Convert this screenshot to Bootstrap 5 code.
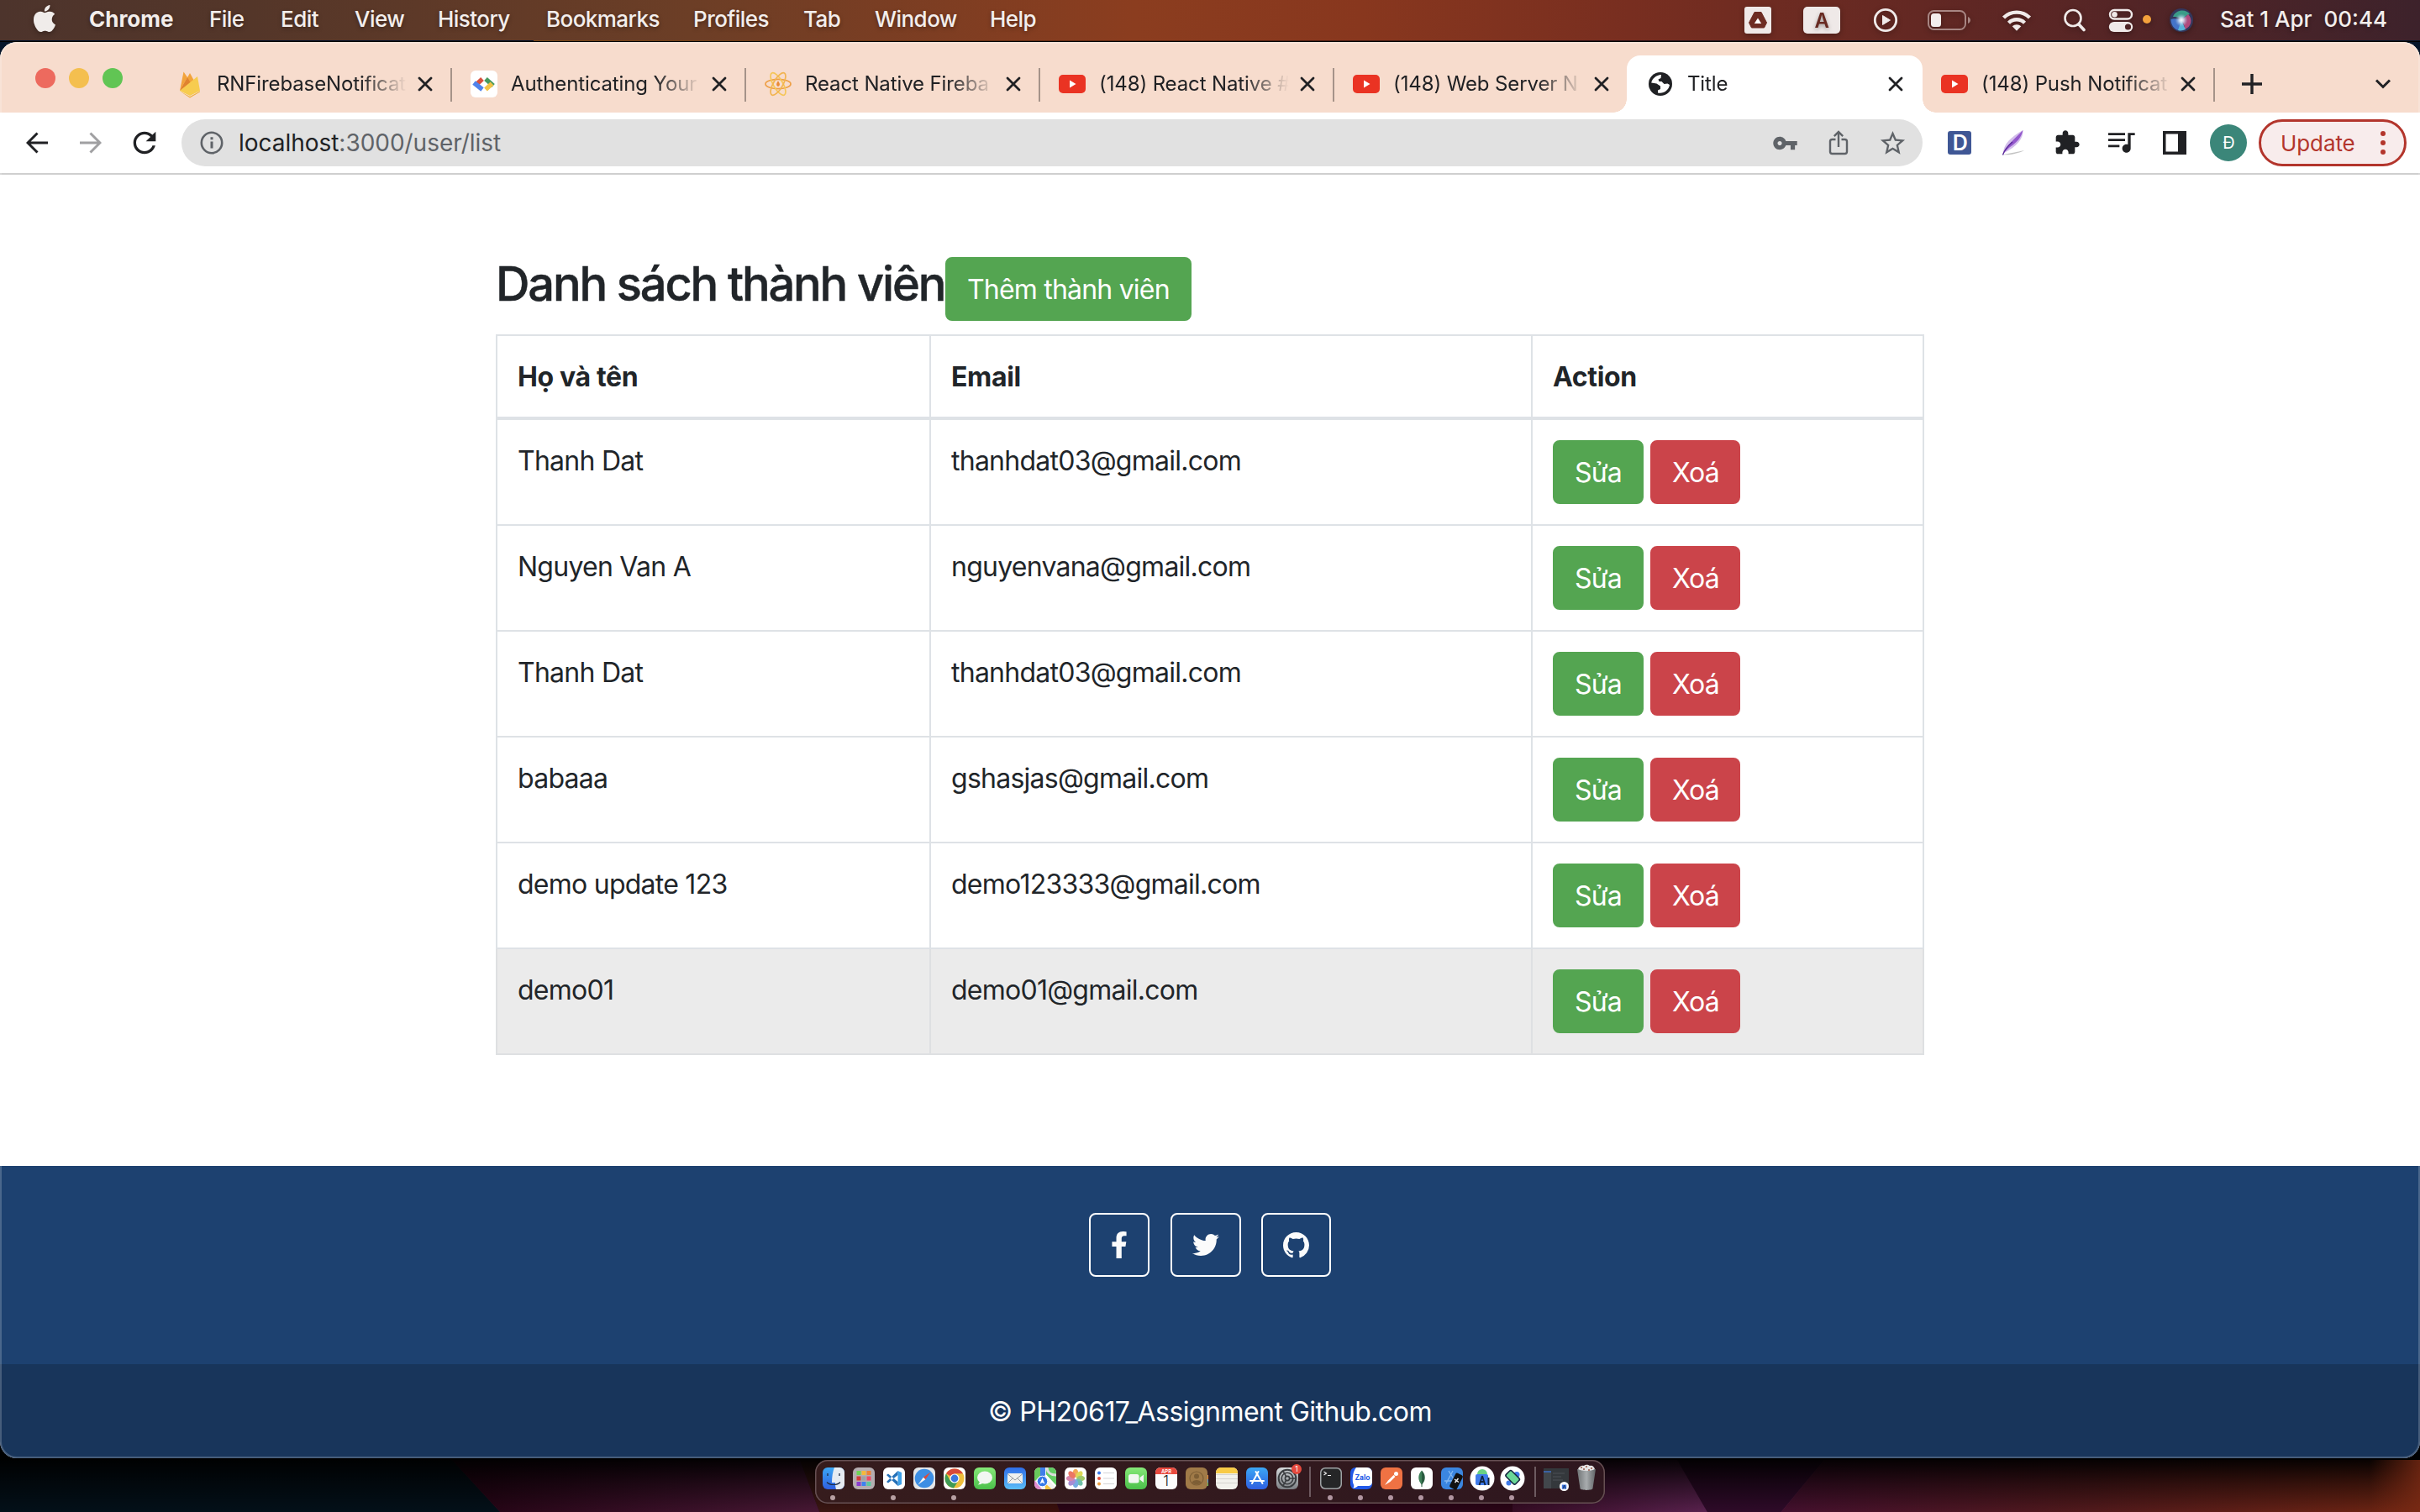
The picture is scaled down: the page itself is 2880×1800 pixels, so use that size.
<!DOCTYPE html>
<html lang="vi">
<head>
<meta charset="utf-8">
<title>Title</title>
<link href="https://cdn.jsdelivr.net/npm/bootstrap@5.3.0/dist/css/bootstrap.min.css" rel="stylesheet">
<style>
html{font-size:32px}
body{width:2880px;height:1800px;overflow:hidden;background:#000;font-family:Inter,"Noto Sans",sans-serif;color:#212529;letter-spacing:-.75px}
svg{display:block;flex:none}
/* menu bar */
.mac-menu{height:48px;background:linear-gradient(90deg,#4d342c 0,#543629 300px,#6c3e26 820px,#8b3d1f 1350px,#88371e 1620px,#782e20 1940px,#5c2624 2400px,#3d222b 2880px);color:#f3eeec;font-size:26px;font-weight:500;letter-spacing:-.55px;line-height:46px;text-shadow:0 2px 5px rgba(0,0,0,.35);white-space:pre}
.mac-menu svg{filter:drop-shadow(0 2px 3px rgba(0,0,0,.3))}
.apple{width:106px;padding:6px 0 0 37px}
.menus>span:nth-child(1){width:143px;font-weight:700;letter-spacing:0}
.menus>span:nth-child(2){width:85px}
.menus>span:nth-child(3){width:88px}
.menus>span:nth-child(4){width:99px}
.menus>span:nth-child(5){width:129px}
.menus>span:nth-child(6){width:175px}
.menus>span:nth-child(7){width:131px}
.menus>span:nth-child(8){width:85px}
.menus>span:nth-child(9){width:137px}
.tray>div{display:flex;align-items:center;justify-content:center;height:48px;width:76px}
.tray>.w-wifi{width:84px}.tray>.w-find{width:58px;padding-right:4px}.tray>.w-cc{width:48px}.tray>.w-dot{width:14px;height:46px}.tray>.w-siri{width:68px}
.clock{width:250px;padding-left:12px;letter-spacing:0}
.seam{height:2px;background:linear-gradient(90deg,#04122a 635px,#7a4818 635px,#5a2410 1400px,#25101a 2000px,#06152a 2400px);border-bottom:1px solid #000}
/* browser window */
.win-back{background:linear-gradient(#06152a 0,#06152a 60px,#000 61px)}
.browser{height:1686px;border-radius:20px;overflow:hidden;background:#fff}
.browser::after{content:"";position:absolute;inset:0;border-radius:20px;border:2px solid rgba(255,255,255,.2);pointer-events:none}
.strip{height:84px;background:#f7dccd;font-size:24px;letter-spacing:-.12px;color:#202124}
.lights{width:188px;padding:2px 0 0 42px;gap:16px;height:84px}
.lights i{width:24px;height:24px;border-radius:50%;background:#ed6a5e}
.lights i+i{background:#f4bf4f}.lights i+i+i{background:#61c554}
.tabx{width:350px;height:68px;padding-left:22px;position:relative}
.tabx.ruled::after{content:"";position:absolute;right:0;top:15px;width:2px;height:40px;background:#a59389}
.tab-ico{width:32px;height:34px;display:flex;align-items:center;justify-content:center;flex:none}
.tab-t{width:232px;margin-left:16px;white-space:nowrap;line-height:36px;-webkit-mask-image:linear-gradient(90deg,#000 172px,transparent 226px);mask-image:linear-gradient(90deg,#000 172px,transparent 226px)}
.tab-x{margin-left:7px}
.tabx.on{background:#fff;border-radius:16px 16px 0 0;margin-left:-2px;width:352px;padding-left:24px}
.tabx.on::before,.tabx.on::after{content:"";position:absolute;bottom:0;width:16px;height:16px}
.tabx.on::before{left:-16px;background:radial-gradient(circle at 0 0,transparent 15.5px,#fff 16px)}
.tabx.on::after{right:-16px;background:radial-gradient(circle at 100% 0,transparent 15.5px,#fff 16px)}
.tabx.last{width:348px}
.tabx.last .tab-x{margin-left:5px}
.strip-end{height:68px;padding:0 34px 0 32px}
.tools{height:74px;border-bottom:2px solid #cfcfcf;color:#202124}
.tools .slot{width:64px;height:72px;display:flex;align-items:center;justify-content:center;flex:none}
.nav-btns{padding-left:12px}
.omni{width:2072px;height:56px;margin:0 12px;border-radius:28px;background:#e1e1e1;font-size:28px;letter-spacing:-.03px;color:#5f6368;padding:0 4px 0 22px}
.omni .slot{height:56px}
.omni b{font-weight:400;color:#202124}
.url{padding-left:18px}
.avatar{width:44px;height:44px;border-radius:50%;background:#3b8679;color:#fff;font-size:20px;line-height:44px;text-align:center}
.update{width:176px;height:56px;border:3px solid #b3352c;border-radius:28px;background:#f8ecec;color:#b3352c;font-size:26px;letter-spacing:-.1px;margin-left:4px;padding-left:23px}
.update svg{margin-left:30px}
/* page */
.page-body{height:1180px;padding-top:98px}
.wrap{width:1700px;margin:0 auto}
.ttl{font-size:56px;font-weight:500;line-height:64px;letter-spacing:-2.15px;margin:0;width:535px;white-space:nowrap;-webkit-text-stroke:.5px #212529}
.btn{border-width:2px;border-radius:8px;letter-spacing:-.8px;padding-top:13px;padding-bottom:11px}
.btn-go{--bs-btn-color:#fff;--bs-btn-bg:#54a551;--bs-btn-border-color:#54a551}
.btn-del{--bs-btn-color:#fff;--bs-btn-bg:#cb444a;--bs-btn-border-color:#cb444a;width:107px}
.members{width:1700px;table-layout:fixed;margin:16px 0 0;border-color:#dee2e6;color:#212529}
.members>:not(caption)>*{border-width:0}
.members>:not(caption)>*>*{padding:25px 24px 23px;border:2px solid #dee2e6;background:transparent}
.members>tbody>tr>td:last-child{padding:24px}
.members .c-name{width:516px}.members .c-mail{width:716px}
.members thead th{border-bottom-width:4px;letter-spacing:-.35px;line-height:48px}
.members .hov>*{background:#ebebeb;border-color:#dee0e2}
.foot-a{height:236px;background:#1d4170;padding-top:56px;gap:24.5px}
.btn-soc{height:76px;border:2px solid #fff;color:#fbfbfb;padding:0;display:flex;align-items:center;justify-content:center;width:84px}
.btn-soc:first-child{width:72px}
.btn-soc:last-child{width:83px}
.foot-b{height:112px;background:#18355b;color:#fff;line-height:112px;padding-top:1px;letter-spacing:-.52px}
/* dock */
.desk{height:64px;position:relative}
.wall{position:absolute;left:0;top:0}
.dock{position:relative;width:940px;height:52px;margin:2px auto 0;padding-left:4px;border-radius:15px;background:linear-gradient(90deg,#361c1d,#2f171f);box-shadow:inset 0 0 0 1.5px #665053}
.dock .rule{width:16px;height:36px;margin-top:8px;background:linear-gradient(#6d5a60,#6d5a60) 8px 0/2px 100% no-repeat}
.dock svg text{letter-spacing:0}
</style>
</head>
<body class="m-0">
<header class="mac-menu d-flex">
  <div class="apple"><svg width="32" height="32" viewBox="0 0 16 16" fill="#f0ecea"><path d="M11.182.008C11.148-.03 9.923.023 8.857 1.18c-1.066 1.156-.902 2.482-.878 2.516.024.034 1.52.087 2.475-1.258.955-1.345.762-2.391.728-2.43Zm3.314 11.733c-.048-.096-2.325-1.234-2.113-3.422.212-2.189 1.675-2.789 1.698-2.854.023-.065-.597-.79-1.254-1.157a3.692 3.692 0 0 0-1.563-.434c-.108-.003-.483-.095-1.254.116-.508.139-1.653.589-1.968.607-.316.018-1.256-.522-2.267-.665-.647-.125-1.333.131-1.824.328-.49.196-1.422.754-2.074 2.237-.652 1.482-.311 3.83-.067 4.56.244.729.625 1.924 1.273 2.796.576.984 1.34 1.667 1.659 1.899.319.232 1.219.386 1.843.067.502-.308 1.408-.485 1.766-.472.357.013 1.061.154 1.782.539.571.197 1.111.115 1.652-.105.541-.221 1.324-1.059 2.238-2.758.347-.79.505-1.217.473-1.282Z"/></svg></div>
  <nav class="menus d-flex"><span>Chrome</span><span>File</span><span>Edit</span><span>View</span><span>History</span><span>Bookmarks</span><span>Profiles</span><span>Tab</span><span>Window</span><span>Help</span></nav>
  <div class="tray d-flex ms-auto">
    <div><svg width="32" height="32" viewBox="0 0 32 32"><rect width="32" height="32" rx="3" fill="#efe9e8"/><path d="M12 6.500h8L26.500 19l-3 6h-15l-3-6z" fill="#6d2b22" stroke="#6d2b22" stroke-linejoin="round"/><path d="M16 13.500l4.200 6.500h-8.400z" fill="#fff"/></svg></div>
    <div><svg width="44" height="32" viewBox="0 0 44 32"><rect width="44" height="32" rx="5" fill="#efe9e8"/><text x="22" y="25" font-size="24" font-weight="600" text-anchor="middle" fill="#682a22">A</text></svg></div>
    <div><svg width="30" height="30" viewBox="0 0 30 30"><circle cx="15" cy="15" r="12.700" fill="none" stroke="#f0eae9" stroke-width="2.800"/><path d="M11.500 9.500v11L20.500 15z" fill="#f0eae9" stroke="#f0eae9" stroke-linejoin="round"/></svg></div>
    <div><svg width="52" height="24" viewBox="0 0 52 24"><rect x="1" y="1" width="44" height="22" rx="6.500" fill="none" stroke="#a88683" stroke-width="2"/><path d="M48 8c2 1 3 2.500 3 4s-1 3-3 4z" fill="#a88683"/><rect x="4" y="4" width="12" height="16" rx="3.500" fill="#f3eeed"/></svg></div>
    <div class="w-wifi"><svg width="36" height="26" viewBox="0 0 36 26" fill="none" stroke="#f0eae9" stroke-width="4.400"><path d="M2.500 10a22 22 0 0 1 31 0M8.500 16.200a13.500 13.500 0 0 1 19 0"/><path d="M12.700 20.300a8 8 0 0 1 10.600 0L18 25.800z" fill="#f0eae9" stroke="none"/></svg></div>
    <div class="w-find"><svg width="26" height="28" viewBox="0 0 26 28" fill="none" stroke="#f0eae9" stroke-linecap="round"><circle cx="11" cy="11.500" r="9.500" stroke-width="2.600"/><path d="M18 19l6 6.500" stroke-width="3.600"/></svg></div>
    <div class="w-cc"><svg width="30" height="28" viewBox="0 0 30 28"><rect x="2" y="2" width="26" height="10.500" rx="5.200" fill="none" stroke="#f0eae9" stroke-width="2.400"/><circle cx="7.500" cy="7.200" r="3.300" fill="#f0eae9"/><rect x=".8" y="16" width="28.400" height="12" rx="6" fill="#f0eae9"/><circle cx="23.500" cy="22" r="3.600" fill="#4f2425"/></svg></div>
    <div class="w-dot"><svg width="10" height="10" viewBox="0 0 10 10"><circle cx="5" cy="5" r="5" fill="#f3a13c"/></svg></div>
    <div class="w-siri"><svg width="28" height="28" viewBox="0 0 28 28"><defs><radialGradient id="si" cx=".5" cy=".5"><stop offset="0" stop-color="#fff"/><stop offset=".25" stop-color="#d8e8f8" stop-opacity=".85"/><stop offset=".7" stop-color="#9cb8dc" stop-opacity="0"/></radialGradient></defs><circle cx="14" cy="14" r="14" fill="#33375c"/><path d="M4 10C7 1 20 0 24 7c-6 2-8 5-10 6-3-3-6-3-10-3z" fill="#3b9c88"/><path d="M22 7c6 6 4 15-4 18 0-5-2-8-4-12 3-1 5-3 8-6z" fill="#b04a7c"/><path d="M1.500 13c4-2 9 0 12.500 1 0 4-2 9-3 12-6-1-9.500-7-9.500-13z" fill="#4474c8"/><path d="M10 26l4-12 5 11c-3 1.500-6 2-9 1z" fill="#58b4d8"/><circle cx="14" cy="14" r="11" fill="url(#si)"/></svg></div>
  </div>
  <div class="clock">Sat 1 Apr  00:44</div>
</header>
<div class="seam"></div>

<div class="win-back">
<main class="browser position-relative">
  <div class="strip d-flex align-items-end">
    <div class="lights d-flex align-items-center"><i></i><i></i><i></i></div>
    <div class="tabx ruled d-flex align-items-center">
      <span class="tab-ico"><svg width="26" height="34" viewBox="0 0 26 34"><path d="M1 25L5.500 2.500 10 9z" fill="#f2a33b"/><path d="M1 25L13 4l5 9z" fill="#f2a33b"/><path d="M1 25l9-16 4 7z" fill="#e0832f"/><path d="M1 25L22 8l3 17-12 6z" fill="#f7cc4f"/><path d="M1 25.500L13 32l12-6.500v1L13 33.500z" fill="#eeb03e"/></svg></span>
      <span class="tab-t">RNFirebaseNotificat</span>
      <svg class="tab-x" width="18" height="18" viewBox="0 0 18 18" stroke="#202124" stroke-width="2.800" stroke-linecap="round"><path d="M2 2l14 14M16 2L2 16"/></svg>
    </div>
    <div class="tabx ruled d-flex align-items-center">
      <span class="tab-ico"><svg width="32" height="32" viewBox="0 0 32 32"><rect width="32" height="32" rx="6" fill="#fff"/><g fill="none" stroke-width="5.500"><path d="M14 10L6.500 17" stroke="#d8503f"/><path d="M4 14.500L14 22.500" stroke="#4f83ec"/><path d="M18 10l9 8" stroke="#479a5f"/><path d="M25.500 15.500L18 22.500" stroke="#f2c246"/></g></svg></span>
      <span class="tab-t">Authenticating Your</span>
      <svg class="tab-x" width="18" height="18" viewBox="0 0 18 18" stroke="#202124" stroke-width="2.800" stroke-linecap="round"><path d="M2 2l14 14M16 2L2 16"/></svg>
    </div>
    <div class="tabx ruled d-flex align-items-center">
      <span class="tab-ico"><svg width="32" height="30" viewBox="0 0 32 30" fill="none" stroke="#ee9f45" stroke-width="1.700"><ellipse cx="16" cy="15" rx="15" ry="5.600"/><ellipse cx="16" cy="15" rx="15" ry="5.600" transform="rotate(60 16 15)" stroke="#f5c658"/><ellipse cx="16" cy="15" rx="15" ry="5.600" transform="rotate(120 16 15)" stroke="#f2b450"/><path d="M16 11.500c2.500 3 2.500 5.500 0 6.500-2.500-1-2.500-3.500 0-6.500z" fill="#ea8a35" stroke="none"/></svg></span>
      <span class="tab-t">React Native Fireba</span>
      <svg class="tab-x" width="18" height="18" viewBox="0 0 18 18" stroke="#202124" stroke-width="2.800" stroke-linecap="round"><path d="M2 2l14 14M16 2L2 16"/></svg>
    </div>
    <div class="tabx ruled d-flex align-items-center">
      <span class="tab-ico"><svg width="32" height="22" viewBox="0 0 32 22"><rect width="32" height="22" rx="5" fill="#ea3323"/><path d="M13 6.500v9l7.500-4.500z" fill="#fff"/></svg></span>
      <span class="tab-t">(148) React Native #</span>
      <svg class="tab-x" width="18" height="18" viewBox="0 0 18 18" stroke="#202124" stroke-width="2.800" stroke-linecap="round"><path d="M2 2l14 14M16 2L2 16"/></svg>
    </div>
    <div class="tabx d-flex align-items-center">
      <span class="tab-ico"><svg width="32" height="22" viewBox="0 0 32 22"><rect width="32" height="22" rx="5" fill="#ea3323"/><path d="M13 6.500v9l7.500-4.500z" fill="#fff"/></svg></span>
      <span class="tab-t">(148) Web Server N</span>
      <svg class="tab-x" width="18" height="18" viewBox="0 0 18 18" stroke="#202124" stroke-width="2.800" stroke-linecap="round"><path d="M2 2l14 14M16 2L2 16"/></svg>
    </div>
    <div class="tabx on d-flex align-items-center">
      <span class="tab-ico"><svg width="28" height="28" viewBox="0 0 28 28"><circle cx="14" cy="14" r="14" fill="#202124"/><path d="M15 3C9 3.500 4.500 7 3.200 12.500l6.300 1 4.500 3v3.500l-3 1.500v3c6.500 1.500 13-3 14-9.500l-2.500-1.500-4 .5-3-3h-3l-1-2.500 3-1.500z" fill="#fff"/></svg></span>
      <span class="tab-t">Title</span>
      <svg class="tab-x" width="18" height="18" viewBox="0 0 18 18" stroke="#202124" stroke-width="2.800" stroke-linecap="round"><path d="M2 2l14 14M16 2L2 16"/></svg>
    </div>
    <div class="tabx ruled last d-flex align-items-center">
      <span class="tab-ico"><svg width="32" height="22" viewBox="0 0 32 22"><rect width="32" height="22" rx="5" fill="#ea3323"/><path d="M13 6.500v9l7.500-4.500z" fill="#fff"/></svg></span>
      <span class="tab-t">(148) Push Notificat</span>
      <svg class="tab-x" width="18" height="18" viewBox="0 0 18 18" stroke="#202124" stroke-width="2.800" stroke-linecap="round"><path d="M2 2l14 14M16 2L2 16"/></svg>
    </div>
    <div class="strip-end d-flex align-items-center flex-fill">
      <svg width="24" height="24" viewBox="0 0 24 24" stroke="#202124" stroke-width="3.400"><path d="M12 0v24M0 12h24"/></svg>
      <svg class="ms-auto" width="20" height="14" viewBox="0 0 20 14" fill="none" stroke="#202124" stroke-width="3"><path d="M2 2.500l8 8 8-8"/></svg>
    </div>
  </div>

  <div class="tools d-flex align-items-center">
    <div class="nav-btns d-flex">
      <span class="slot"><svg width="26" height="26" viewBox="0 0 26 26" fill="none" stroke="#202124" stroke-width="3"><path d="M26 13H2.500M13.500 1.500L2 13l11.500 11.500"/></svg></span>
      <span class="slot"><svg width="26" height="26" viewBox="0 0 26 26" fill="none" stroke="#a0a0a2" stroke-width="3"><path d="M0 13h23.500M12.500 1.500L24 13 12.500 24.500"/></svg></span>
      <span class="slot"><svg width="40" height="40" viewBox="0 0 24 24" fill="#202124"><path d="M17.650 6.350C16.200 4.900 14.210 4 12 4c-4.420 0-7.990 3.580-7.990 8s3.570 8 7.990 8c3.730 0 6.840-2.550 7.730-6h-2.080c-.82 2.330-3.040 4-5.650 4-3.310 0-6-2.690-6-6s2.690-6 6-6c1.660 0 3.140.69 4.220 1.780L13 11h7V4l-2.350 2.350z"/></svg></span>
    </div>
    <div class="omni d-flex align-items-center">
      <svg width="28" height="28" viewBox="0 0 28 28" fill="none" stroke="#5f6368" stroke-width="2.600"><circle cx="14" cy="14" r="12.200"/><path d="M14 12.500v8M14 7.200v3" stroke-width="3"/></svg>
      <span class="url"><b>localhost</b>:3000/user/list</span>
      <span class="slot ms-auto"><svg width="31" height="31" viewBox="0 0 24 24" fill="#5f6368"><path d="M12.650 10C11.830 7.670 9.610 6 7 6c-3.310 0-6 2.690-6 6s2.690 6 6 6c2.610 0 4.830-1.670 5.650-4H17v4h4v-4h2v-4H12.650zM7 14c-1.100 0-2-.9-2-2s.9-2 2-2 2 .9 2 2-.9 2-2 2z"/></svg></span>
      <span class="slot"><svg width="24" height="30" viewBox="0 0 24 30" fill="none" stroke="#5f6368" stroke-width="2.400"><path d="M8.500 11H4.500a2.500 2.500 0 0 0-2.500 2.500v12A2.500 2.500 0 0 0 4.500 28h15a2.500 2.500 0 0 0 2.500-2.500v-12a2.500 2.500 0 0 0-2.500-2.500h-4M12 20V2.500M6.800 7.200L12 2l5.200 5.200"/></svg></span>
      <span class="slot"><svg width="35" height="35" viewBox="0 0 24 24" fill="#5f6368"><path d="M22 9.240l-7.190-.62L12 2 9.190 8.630 2 9.240l5.460 4.730L5.820 21 12 17.270 18.180 21l-1.630-7.030L22 9.240zM12 15.400l-3.760 2.270 1-4.280-3.320-2.880 4.380-.38L12 6.100l1.710 4.040 4.380.38-3.320 2.880 1 4.280L12 15.400z"/></svg></span>
    </div>
    <span class="slot"><svg width="28" height="28" viewBox="0 0 28 28"><rect width="28" height="28" rx="3" fill="#3f5795"/><text x="14.300" y="23" font-size="25" font-weight="600" text-anchor="middle" fill="#fff">D</text></svg></span>
    <span class="slot"><svg width="30" height="32" viewBox="0 0 30 32"><path d="M3 30c6 1 18-1 25-5-7 2-16 3-25 5z" fill="#c4c4c4"/><path d="M3 28.500C3 18 12 9 26.500 1c.5 9-6 19-23.500 27.500z" fill="#d2bdea"/><path d="M3 29C7 19 15 13 26.500 1c-2 9-8 15-14 19-4 3-6 5-9.500 9z" fill="#9358cc"/><path d="M2.500 30.500C4 26 8 20 14 15" fill="none" stroke="#5a2a9a" stroke-width="1.400"/></svg></span>
    <span class="slot"><svg width="32" height="32" viewBox="0 0 24 24" fill="#202124"><path d="M20.500 11H19V7c0-1.100-.9-2-2-2h-4V3.500C13 2.120 11.880 1 10.500 1S8 2.120 8 3.500V5H4c-1.100 0-1.990.9-1.990 2v3.800H3.500c1.490 0 2.700 1.210 2.700 2.700s-1.210 2.700-2.700 2.700H2V20c0 1.100.9 2 2 2h3.800v-1.500c0-1.490 1.210-2.700 2.700-2.700 1.490 0 2.700 1.210 2.700 2.700V22H17c1.100 0 2-.9 2-2v-4h1.500c1.380 0 2.500-1.120 2.500-2.500S21.880 11 20.500 11z"/></svg></span>
    <span class="slot"><svg width="40" height="40" viewBox="0 0 24 24" fill="#202124"><path d="M15 5H3v1.600h12V5zm0 4.200H3v1.600h12V9.200zM11 13.500H3v1.600h8v-1.600zM17 5v8.180c-.31-.11-.65-.18-1-.18-1.660 0-3 1.340-3 3s1.340 3 3 3 3-1.340 3-3V6.600h3V5h-5z"/></svg></span>
    <span class="slot"><svg width="28" height="28" viewBox="0 0 28 28"><path fill="#202124" fill-rule="evenodd" d="M0 0h28v28H0zM3.500 3.500v21H18v-21z"/></svg></span>
    <span class="slot"><span class="avatar">Đ</span></span>
    <div class="update d-flex align-items-center"><span>Update</span><svg width="6" height="28" viewBox="0 0 6 28" fill="#b3352c"><circle cx="3" cy="3" r="3"/><circle cx="3" cy="14" r="3"/><circle cx="3" cy="25" r="3"/></svg></div>
  </div>

  <section class="page-body">
    <div class="wrap">
      <div class="d-flex align-items-start">
        <h3 class="ttl">Danh sách thành viên</h3>
        <a class="btn btn-go">Thêm thành viên</a>
      </div>
      <table class="table table-bordered members">
        <colgroup><col class="c-name"><col class="c-mail"><col></colgroup>
        <thead><tr><th>Họ và tên</th><th>Email</th><th>Action</th></tr></thead>
        <tbody>
          <tr><td>Thanh Dat</td><td>thanhdat03@gmail.com</td><td><div class="d-flex gap-1"><a class="btn btn-go">Sửa</a><a class="btn btn-del">Xoá</a></div></td></tr>
          <tr><td>Nguyen Van A</td><td>nguyenvana@gmail.com</td><td><div class="d-flex gap-1"><a class="btn btn-go">Sửa</a><a class="btn btn-del">Xoá</a></div></td></tr>
          <tr><td>Thanh Dat</td><td>thanhdat03@gmail.com</td><td><div class="d-flex gap-1"><a class="btn btn-go">Sửa</a><a class="btn btn-del">Xoá</a></div></td></tr>
          <tr><td>babaaa</td><td>gshasjas@gmail.com</td><td><div class="d-flex gap-1"><a class="btn btn-go">Sửa</a><a class="btn btn-del">Xoá</a></div></td></tr>
          <tr><td>demo update 123</td><td>demo123333@gmail.com</td><td><div class="d-flex gap-1"><a class="btn btn-go">Sửa</a><a class="btn btn-del">Xoá</a></div></td></tr>
          <tr class="hov"><td>demo01</td><td>demo01@gmail.com</td><td><div class="d-flex gap-1"><a class="btn btn-go">Sửa</a><a class="btn btn-del">Xoá</a></div></td></tr>
        </tbody>
      </table>
    </div>
  </section>
  <footer>
    <div class="foot-a d-flex justify-content-center align-items-start">
      <a class="btn btn-soc"><svg width="20" height="32" viewBox="0 0 320 512" fill="currentColor"><path d="M279.140 288l14.220-92.660h-88.910v-60.130c0-25.350 12.420-50.060 52.240-50.060h40.420V6.260S260.430 0 225.360 0c-73.220 0-121.080 44.380-121.080 124.720v70.620H22.890V288h81.390v224h100.170V288z"/></svg></a>
      <a class="btn btn-soc"><svg width="32" height="32" viewBox="0 0 512 512" fill="currentColor"><path d="M459.370 151.716c.325 4.548.325 9.097.325 13.645 0 138.720-105.583 298.558-298.558 298.558-59.452 0-114.680-17.219-161.137-47.106 8.447.974 16.568 1.299 25.340 1.299 49.055 0 94.213-16.568 130.274-44.832-46.132-.975-84.792-31.188-98.112-72.772 6.498.974 12.995 1.624 19.818 1.624 9.421 0 18.843-1.300 27.614-3.573-48.081-9.747-84.143-51.980-84.143-102.985v-1.299c13.969 7.797 30.214 12.670 47.431 13.319-28.264-18.843-46.781-51.005-46.781-87.391 0-19.492 5.197-37.360 14.294-52.954 51.655 63.675 129.300 105.258 216.365 109.807-1.624-7.797-2.599-15.918-2.599-24.040 0-57.828 46.782-104.934 104.934-104.934 30.213 0 57.502 12.670 76.670 33.137 23.715-4.548 46.456-13.320 66.599-25.340-7.798 24.366-24.366 44.833-46.132 57.827 21.117-2.273 41.584-8.122 60.426-16.243-14.292 20.791-32.161 39.308-52.628 54.253z"/></svg></a>
      <a class="btn btn-soc"><svg width="31" height="31" viewBox="0 0 16 16" fill="currentColor"><path d="M8 0C3.580 0 0 3.580 0 8c0 3.540 2.290 6.530 5.470 7.590.4.07.55-.17.55-.38 0-.19-.01-.82-.01-1.490-2.010.37-2.530-.49-2.690-.94-.09-.23-.48-.94-.82-1.130-.28-.15-.68-.52-.01-.53.63-.01 1.080.58 1.230.82.72 1.210 1.870.87 2.330.66.07-.52.28-.87.51-1.070-1.780-.2-3.640-.89-3.640-3.950 0-.87.31-1.590.82-2.150-.08-.2-.36-1.020.08-2.120 0 0 .67-.21 2.200.82.64-.18 1.320-.27 2-.27.68 0 1.360.09 2 .27 1.530-1.040 2.200-.82 2.200-.82.44 1.100.16 1.920.08 2.120.51.56.82 1.270.82 2.150 0 3.070-1.870 3.750-3.650 3.950.29.25.54.73.54 1.480 0 1.070-.01 1.930-.01 2.200 0 .21.15.46.55.38A8.013 8.013 0 0 0 16 8c0-4.420-3.580-8-8-8z"/></svg></a>
    </div>
    <div class="foot-b text-center">© PH20617_Assignment Github.com</div>
  </footer>
</main>
</div>

<div class="desk">
  <svg class="wall" width="2880" height="64" viewBox="0 0 2880 64">
    <defs>
      <linearGradient id="wa" x1="0" x2="1" y1="0" y2="0"><stop offset="0" stop-color="#2c0418"/><stop offset="1" stop-color="#5a1e42"/></linearGradient>
      <linearGradient id="wb" gradientUnits="userSpaceOnUse" x1="1800" x2="2033" y1="0" y2="0"><stop offset="0" stop-color="#44102e"/><stop offset="1" stop-color="#702a62"/></linearGradient>
      <linearGradient id="wc" x1="0" x2="1" y1="0" y2="0"><stop offset="0" stop-color="#56143a"/><stop offset=".45" stop-color="#641f24"/><stop offset="1" stop-color="#8a2e16"/></linearGradient>
      <linearGradient id="wm" x1="0" x2="1" y1="0" y2="0"><stop offset="0" stop-color="#4a1d18"/><stop offset="1" stop-color="#4a1410"/></linearGradient>
      <linearGradient id="ws" x1="0" x2="0" y1="0" y2="1"><stop offset="0" stop-opacity=".94"/><stop offset=".45" stop-opacity=".58"/><stop offset="1" stop-opacity=".18"/></linearGradient>
      <linearGradient id="we" x1="0" x2="1" y1="0" y2="0"><stop offset="0" stop-color="#7a2a14" stop-opacity="0"/><stop offset="1" stop-color="#7a2a14" stop-opacity=".8"/></linearGradient>
    </defs>
    <rect width="2880" height="64" fill="#04141f"/>
    <path d="M538 0H2880V64H597z" fill="url(#wb)"/>
    <path d="M538 0H952L976 64H597z" fill="url(#wa)"/>
    <path d="M952 0H1240L1262 64H976z" fill="url(#wm)"/>
    <path d="M1240 0H1800V64H1262z" fill="#35061c"/>
    <path d="M1996 0H2171L2118 64H2033z" fill="#3a0d33"/>
    <path d="M2171 0H2880V64H2118z" fill="url(#wc)"/>
    <rect width="2880" height="64" fill="url(#ws)"/>
    <rect x="2820" width="60" height="64" fill="url(#we)"/>
  </svg>
  <div class="dock d-flex">
    <svg width="0" height="0" class="position-absolute"><defs>
      <linearGradient id="gb" x1="0" x2="0" y1="0" y2="1"><stop offset="0" stop-color="#3ba7f5"/><stop offset="1" stop-color="#2f5fe0"/></linearGradient>
      <linearGradient id="gg" x1="0" x2="0" y1="0" y2="1"><stop offset="0" stop-color="#86e878"/><stop offset="1" stop-color="#4bc04a"/></linearGradient>
      <linearGradient id="gm" x1="0" x2="0" y1="0" y2="1"><stop offset="0" stop-color="#2f6de8"/><stop offset="1" stop-color="#5cbef8"/></linearGradient>
      <linearGradient id="gs" x1="0" x2="0" y1="0" y2="1"><stop offset="0" stop-color="#d4d8da"/><stop offset="1" stop-color="#7c8084"/></linearGradient>
      <linearGradient id="gt" x1="0" x2="1" y1="0" y2="0"><stop offset="0" stop-color="#707476"/><stop offset=".5" stop-color="#a8acae"/><stop offset="1" stop-color="#606466"/></linearGradient>
    </defs></svg>
    <!-- Finder -->
    <svg width="36" height="52" viewBox="0 0 36 52"><rect x="5" y="9" width="26" height="26" rx="6" fill="url(#gb)"/><path d="M19 9h6a6 6 0 0 1 6 6v14a6 6 0 0 1-6 6h-4c-.8-3-1-5-1-8h-4c0-7 1-13 3-18z" fill="#e6ebf2"/><path d="M11 16v3M25 16v3" stroke="#1d2a44" stroke-width="1.300"/><path d="M10 26.500c4 4 12 4 16 0" fill="none" stroke="#1d2a44" stroke-width="1.200"/><circle cx="17" cy="45" r="3" fill="#b69fa2"/></svg>
    <!-- Launchpad -->
    <svg width="36" height="52" viewBox="0 0 36 52"><rect x="5" y="9" width="26" height="26" rx="6" fill="#b5adb0"/><path d="M9.500 13h5v5h-5z" fill="#6fd455"/><path d="M15.500 13h5v5h-5z" fill="#f5b83c"/><path d="M21.500 13h5v5h-5z" fill="#ee8236"/><path d="M9.500 19.500h5v5h-5z" fill="#d33b36"/><path d="M15.500 19.500h5v5h-5z" fill="#a0a0a4"/><path d="M21.500 19.500h5v5h-5z" fill="#ee4a68"/><path d="M9.500 26h5v5h-5z" fill="#8a3bd0"/><path d="M15.500 26h5v5h-5z" fill="#3e82f0"/><path d="M21.500 26h5v5h-5z" fill="#5cc8a0"/></svg>
    <!-- VS Code -->
    <svg width="36" height="52" viewBox="0 0 36 52"><rect x="5" y="9" width="26" height="26" rx="6" fill="#fff"/><path d="M22.500 13l4.500 2v14l-4.500 2z" fill="#3da0e8"/><path d="M22.500 13v5L11 27.500 9 26z M22.500 31v-5L11 16.500 9 18z" fill="#2470b8"/><circle cx="17" cy="45" r="3" fill="#b69fa2"/></svg>
    <!-- Safari -->
    <svg width="36" height="52" viewBox="0 0 36 52"><rect x="5" y="9" width="26" height="26" rx="6" fill="#e4e6e8"/><circle cx="18" cy="22" r="11.300" fill="#3c8ee4"/><path d="M25.500 14.500l-6.200 8.700-2.500-2.500z" fill="#e04a3a"/><path d="M10.500 29.500l6.300-8.800 2.500 2.500z" fill="#f4f4f4"/></svg>
    <!-- Chrome -->
    <svg width="36" height="52" viewBox="0 0 36 52"><rect x="5" y="9" width="26" height="26" rx="6" fill="#fff"/><circle cx="18" cy="22" r="11.500" fill="#eebf3c"/><path d="M18 22L8 16.300A11.500 11.500 0 0 1 28 16.300H18z" fill="#d9493a"/><path d="M8 16.300A11.500 11.500 0 0 0 17 33.500L22.500 24.800 18 22 13 25z" fill="#3f9b55"/><circle cx="18" cy="22" r="5.600" fill="#fff"/><circle cx="18" cy="22" r="4.400" fill="#3d78e0"/><circle cx="17" cy="45" r="3" fill="#b69fa2"/></svg>
    <!-- Messages -->
    <svg width="36" height="52" viewBox="0 0 36 52"><rect x="5" y="9" width="26" height="26" rx="6" fill="url(#gg)"/><ellipse cx="18" cy="21" rx="9" ry="7.600" fill="#f2f7f2"/><path d="M12 25c0 2-1 3.500-2.500 4.500 2.500 0 5-1 6-2z" fill="#f2f7f2"/></svg>
    <!-- Mail -->
    <svg width="36" height="52" viewBox="0 0 36 52"><rect x="5" y="9" width="26" height="26" rx="6" fill="url(#gm)"/><rect x="9" y="16" width="18" height="12" rx="1.500" fill="#f0f0ee"/><path d="M9.500 17l8.500 7 8.500-7M9.500 27.500l6-6M26.500 27.500l-6-6" fill="none" stroke="#8a8e92" stroke-width=".9"/></svg>
    <!-- Maps -->
    <svg width="36" height="52" viewBox="0 0 36 52"><clipPath id="cm"><rect x="5" y="9" width="26" height="26" rx="6"/></clipPath><g clip-path="url(#cm)"><path d="M5 9h26v26H5z" fill="#f2f2ee"/><path d="M5 9h7v10L5 26z" fill="#68c95c"/><path d="M19 9h12v22L19 18z" fill="#62cc62"/><path d="M12 9h6v12h-6z" fill="#3f7eea"/><path d="M5 24l9 11H5z" fill="#e08ad0"/><path d="M18 28l8 7h-8z" fill="#f4c442"/><path d="M20 9c0 6 5 9 11 9" fill="none" stroke="#dcdcdc" stroke-width="3"/><path d="M18 18l13 14" stroke="#fff" stroke-width="2.500"/></g><circle cx="14.500" cy="25.500" r="6.300" fill="#3579e8" stroke="#fff"/><path d="M14.500 21.500l3 7-3-1.500-3 1.500z" fill="#fff"/></svg>
    <!-- Photos -->
    <svg width="36" height="52" viewBox="0 0 36 52"><rect x="5" y="9" width="26" height="26" rx="6" fill="#fff"/><g opacity=".85"><ellipse cx="18" cy="15.800" rx="3.300" ry="5" fill="#f29a38"/><ellipse cx="18" cy="15.800" rx="3.300" ry="5" fill="#d9d23c" transform="rotate(45 18 22)"/><ellipse cx="18" cy="15.800" rx="3.300" ry="5" fill="#92c050" transform="rotate(90 18 22)"/><ellipse cx="18" cy="15.800" rx="3.300" ry="5" fill="#58b69a" transform="rotate(135 18 22)"/><ellipse cx="18" cy="15.800" rx="3.300" ry="5" fill="#5f9ede" transform="rotate(180 18 22)"/><ellipse cx="18" cy="15.800" rx="3.300" ry="5" fill="#9a78cc" transform="rotate(225 18 22)"/><ellipse cx="18" cy="15.800" rx="3.300" ry="5" fill="#d2719e" transform="rotate(270 18 22)"/><ellipse cx="18" cy="15.800" rx="3.300" ry="5" fill="#e8604a" transform="rotate(315 18 22)"/></g></svg>
    <!-- Reminders -->
    <svg width="36" height="52" viewBox="0 0 36 52"><rect x="5" y="9" width="26" height="26" rx="6" fill="#fff"/><circle cx="10" cy="15.500" r="2" fill="#3a78ea"/><circle cx="10" cy="22" r="2" fill="#e2503e"/><circle cx="10" cy="28.500" r="2" fill="#eda045"/><path d="M15 15.500h13M15 22h13M15 28.500h13" stroke="#cfcfd2" stroke-width=".9"/></svg>
    <!-- FaceTime -->
    <svg width="36" height="52" viewBox="0 0 36 52"><rect x="5" y="9" width="26" height="26" rx="6" fill="url(#gg)"/><rect x="9" y="17" width="12.500" height="10.500" rx="2.500" fill="#f2f7f2"/><path d="M22.500 21l4.500-3.500v9.500l-4.500-3.500z" fill="#f2f7f2"/></svg>
    <!-- Calendar -->
    <svg width="36" height="52" viewBox="0 0 36 52"><rect x="5" y="9" width="26" height="26" rx="6" fill="#fbfbfb"/><path d="M5 17v-2a6 6 0 0 1 6-6h14a6 6 0 0 1 6 6v2z" fill="#e8493e"/><text x="18" y="15.600" font-size="6" font-weight="600" text-anchor="middle" fill="#fff">APR</text><text x="17.500" y="31" font-size="17" font-weight="300" text-anchor="middle" fill="#222">1</text></svg>
    <!-- Contacts -->
    <svg width="36" height="52" viewBox="0 0 36 52"><path d="M30 18h2v5h-2z" fill="#e08a3c"/><path d="M30 23h2v4h-2z" fill="#5aa0d8"/><path d="M30 27h2v4h-2z" fill="#68b05a"/><rect x="5" y="9" width="26" height="26" rx="6" fill="#a07a48"/><circle cx="18" cy="22" r="8" fill="none" stroke="#7d5e35" stroke-width="1.200"/><circle cx="18" cy="19.500" r="3" fill="#7d5e35"/><path d="M12.500 27c1-4 10-4 11 0-3 3-8 3-11 0z" fill="#7d5e35"/></svg>
    <!-- Notes -->
    <svg width="36" height="52" viewBox="0 0 36 52"><rect x="5" y="9" width="26" height="26" rx="6" fill="#f2f1ec"/><path d="M5 16v-1a6 6 0 0 1 6-6h14a6 6 0 0 1 6 6v1z" fill="#f8ca46"/><path d="M5 17.500h26M5 22.500h26M5 27.500h26" stroke="#cdccc8" stroke-width=".8"/></svg>
    <!-- App Store -->
    <svg width="36" height="52" viewBox="0 0 36 52"><rect x="5" y="9" width="26" height="26" rx="6" fill="url(#gb)"/><path d="M19.500 14l-7.500 14M16.500 14l8 14M10 25h16" stroke="#fff" stroke-width="2" stroke-linecap="round"/></svg>
    <!-- Settings -->
    <svg width="36" height="52" viewBox="0 0 36 52"><rect x="5" y="9" width="26" height="26" rx="6" fill="url(#gs)"/><g fill="none" stroke="#3a3d40"><circle cx="18" cy="22" r="10.300" stroke-width="2"/><circle cx="18" cy="22" r="6.800" stroke-width="1.600"/><circle cx="18" cy="22" r="2.600" stroke-width="1.600"/><path d="M20.600 22h8M16.700 24.200l-4 7M16.700 19.800l-4-7" stroke-width="1.600"/></g><circle cx="29" cy="11" r="6" fill="#e5493d"/><text x="29" y="14" font-size="8.500" text-anchor="middle" fill="#fff">1</text></svg>
    <div class="rule"></div>
    <!-- Terminal -->
    <svg width="36" height="52" viewBox="0 0 36 52"><rect x="5" y="9" width="26" height="26" rx="6" fill="#9fa3a5"/><rect x="6.500" y="10.500" width="23" height="23" rx="4.800" fill="#252627"/><path d="M9.500 14l3 2-3 2M14 18.500h4" fill="none" stroke="#f0f0f0" stroke-width="1.100"/><circle cx="17" cy="45" r="3" fill="#b095a0"/></svg>
    <!-- Zalo -->
    <svg width="36" height="52" viewBox="0 0 36 52"><rect x="5" y="9" width="26" height="26" rx="6" fill="#2259e8"/><path d="M12 9h13a6 6 0 0 1 6 6v11c0 3-2 5-5 5H14c-2 2-4 2.500-6 2.500 1.500-1 1.500-2.500 1-4C7 26 7 15 12 9z" fill="#fff"/><text x="19.500" y="24" font-size="8.500" font-weight="700" text-anchor="middle" fill="#2259e8">Zalo</text><circle cx="17" cy="45" r="3" fill="#b095a0"/></svg>
    <!-- Postman -->
    <svg width="36" height="52" viewBox="0 0 36 52"><rect x="5" y="9" width="26" height="26" rx="6" fill="#ef7243"/><path d="M10 30l4-5.500 6.500-6.500 2 2-6 6z" fill="#fff"/><circle cx="23.500" cy="16.500" r="2.500" fill="#fff"/><circle cx="17" cy="45" r="3" fill="#b095a0"/></svg>
    <!-- MongoDB Compass -->
    <svg width="36" height="52" viewBox="0 0 36 52"><rect x="5" y="9" width="26" height="26" rx="6" fill="#fff"/><path d="M18 12.500c5 5 5 12 0 17z" fill="#2a5c40"/><path d="M18 12.500c-5 5-5 12 0 17z" fill="#3e8058"/><path d="M18 28v4" stroke="#2a5c40"/><circle cx="17" cy="45" r="3" fill="#b095a0"/></svg>
    <!-- Simulator -->
    <svg width="36" height="52" viewBox="0 0 36 52"><rect x="5" y="9" width="26" height="26" rx="6" fill="#3b86e0"/><path d="M19 13l-8 15M14 13l8 13M9 25h13" stroke="#84b8f0" stroke-width="1.300" fill="none"/><rect x="18.500" y="16" width="9.500" height="19" rx="2" fill="#111" transform="rotate(27 23 25)"/><path d="M21 23l5 3.500M25.500 22l-4 5" stroke="#eee" stroke-width="1.500"/><circle cx="17" cy="45" r="3" fill="#b095a0"/></svg>
    <!-- Android Studio -->
    <svg width="36" height="52" viewBox="0 0 36 52"><circle cx="18" cy="22" r="14.500" fill="#fff"/><path d="M12 17a6 6 0 0 1 12 0z" fill="#69d184"/><rect x="10" y="17" width="15" height="13" rx="2" fill="#3f7bea"/><path d="M18 19l-3.500 11M18 19l3.500 11M15.500 26h5" stroke="#12233d" stroke-width="1.800"/><path d="M25.500 21v9" stroke="#12233d" stroke-width="2"/><circle cx="17" cy="45" r="3" fill="#b095a0"/></svg>
    <!-- Emulator -->
    <svg width="36" height="52" viewBox="0 0 36 52"><circle cx="18" cy="22" r="14.500" fill="#fff"/><circle cx="23" cy="17.500" r="3.500" fill="#3f7bea"/><circle cx="13.500" cy="27.500" r="3" fill="#3f7bea"/><rect x="13.500" y="13" width="9.500" height="16" rx="2" fill="#6ad797" stroke="#12233d" stroke-width="1.500" transform="rotate(-45 18 21)"/><circle cx="17" cy="45" r="3" fill="#b095a0"/></svg>
    <div class="rule"></div>
    <!-- Minimised window -->
    <svg width="36" height="52" viewBox="0 0 36 52"><rect x="3" y="10" width="30" height="24" fill="#34383c"/><path d="M3 13h9v21H3z" fill="#42474c"/><path d="M3 14h9" stroke="#3a6ac0" stroke-width="1.500"/><path d="M14 16h14M14 20h10M14 24h12" stroke="#4c5156" stroke-width="1"/><circle cx="27.500" cy="31.500" r="5.500" fill="#fff"/><path d="M24.800 29.500h5.400v5h-5.400z" fill="#3f7bea"/><path d="M27.500 30l-1.500 4.500M27.500 30l1.500 4.500" stroke="#12233d" stroke-width=".8"/></svg>
    <!-- Trash -->
    <svg width="36" height="52" viewBox="0 0 36 52"><path d="M7 11h22l-3.500 23c-.3 2.500-14.700 2.500-15 0z" fill="url(#gt)"/><path d="M8 11c1-3 4-5 7-4 3-2 5-1 7 0 3-1 5 1 6 4-4 2.500-16 2.500-20 0z" fill="#e6e4e4"/><path d="M11 9h2M17 8h2M23 10h2M14 11h2M20 12h2" stroke="#9a5a4a" stroke-width="1.300"/></svg>
  </div>
</div>
<script src="https://cdn.jsdelivr.net/npm/bootstrap@5.3.0/dist/js/bootstrap.bundle.min.js"></script>
</body>
</html>
